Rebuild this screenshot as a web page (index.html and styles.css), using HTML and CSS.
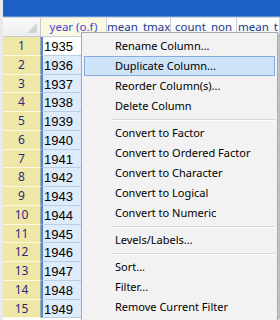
FILE: index.html
```html
<!DOCTYPE html>
<html>
<head>
    <link rel="stylesheet" href="styles.css">
</head>
<body>
    <div class="window">
        <div class="titlebar"></div>
        <div class="sheet">
            <div class="corner"><span class="corner-tri"></span></div>
            <div class="col-head col-selected">year (o.f)</div>
            <div class="col-head">mean_tmax</div>
            <div class="col-head">count_non</div>
            <div class="col-head">mean_t</div>

            <div class="row-head">1</div><div class="cell cell-active">1935</div><div class="cell-plain"></div><div class="cell-plain"></div><div class="cell-plain"></div>
            <div class="row-head">2</div><div class="cell">1936</div><div class="cell-plain"></div><div class="cell-plain"></div><div class="cell-plain"></div>
            <div class="row-head">3</div><div class="cell">1937</div><div class="cell-plain"></div><div class="cell-plain"></div><div class="cell-plain"></div>
            <div class="row-head">4</div><div class="cell">1938</div><div class="cell-plain"></div><div class="cell-plain"></div><div class="cell-plain"></div>
            <div class="row-head">5</div><div class="cell">1939</div><div class="cell-plain"></div><div class="cell-plain"></div><div class="cell-plain"></div>
            <div class="row-head">6</div><div class="cell">1940</div><div class="cell-plain"></div><div class="cell-plain"></div><div class="cell-plain"></div>
            <div class="row-head">7</div><div class="cell">1941</div><div class="cell-plain"></div><div class="cell-plain"></div><div class="cell-plain"></div>
            <div class="row-head">8</div><div class="cell">1942</div><div class="cell-plain"></div><div class="cell-plain"></div><div class="cell-plain"></div>
            <div class="row-head">9</div><div class="cell">1943</div><div class="cell-plain"></div><div class="cell-plain"></div><div class="cell-plain"></div>
            <div class="row-head">10</div><div class="cell">1944</div><div class="cell-plain"></div><div class="cell-plain"></div><div class="cell-plain"></div>
            <div class="row-head">11</div><div class="cell">1945</div><div class="cell-plain"></div><div class="cell-plain"></div><div class="cell-plain"></div>
            <div class="row-head">12</div><div class="cell">1946</div><div class="cell-plain"></div><div class="cell-plain"></div><div class="cell-plain"></div>
            <div class="row-head">13</div><div class="cell">1947</div><div class="cell-plain"></div><div class="cell-plain"></div><div class="cell-plain"></div>
            <div class="row-head">14</div><div class="cell">1948</div><div class="cell-plain"></div><div class="cell-plain"></div><div class="cell-plain"></div>
            <div class="row-head">15</div><div class="cell">1949</div><div class="cell-plain"></div><div class="cell-plain"></div><div class="cell-plain"></div>
        </div>
    </div>

    <div class="menu">
        <div class="menu-item">Rename Column...</div>
        <div class="menu-item menu-item-hover">Duplicate Column...</div>
        <div class="menu-item">Reorder Column(s)...</div>
        <div class="menu-item">Delete Column</div>
        <div class="menu-sep"></div>
        <div class="menu-item">Convert to Factor</div>
        <div class="menu-item">Convert to Ordered Factor</div>
        <div class="menu-item">Convert to Character</div>
        <div class="menu-item">Convert to Logical</div>
        <div class="menu-item">Convert to Numeric</div>
        <div class="menu-sep"></div>
        <div class="menu-item">Levels/Labels...</div>
        <div class="menu-sep"></div>
        <div class="menu-item">Sort...</div>
        <div class="menu-item">Filter...</div>
        <div class="menu-item">Remove Current Filter</div>
    </div>
</body>
</html>
```

FILE: styles.css
```css
* {
    margin: 0;
    padding: 0;
    box-sizing: border-box;
}

body {
    width: 280px;
    height: 320px;
    overflow: hidden;
    background-color: #e9e9e9;
    font-family: 'Noto Sans', 'Liberation Sans', sans-serif;
    position: relative;
}

.window {
    margin-left: 3px;
    background-color: #ffffff;
    height: 100%;
}

.titlebar {
    height: 17px;
    background-color: #1c60c6;
    border-bottom: 1px solid #5a8fd8;
}

.sheet {
    display: grid;
    grid-template-columns: 38px 66px 64px 66px 1fr;
    grid-template-rows: 19px repeat(15, 18.75px);
    background-color: #ffffff;
    border-top: 1px solid #d8d8d8;
}

.corner {
    position: relative;
    background: linear-gradient(#fafafa, #eeeeee);
    border-right: 1px solid #c8c8c8;
    border-bottom: 1px solid #c8c8c8;
}

.corner-tri {
    position: absolute;
    right: 3px;
    bottom: 3px;
    width: 0;
    height: 0;
    border-left: 10px solid transparent;
    border-bottom: 10px solid #d4d4d4;
}

.col-head {
    font-size: 11.5px;
    color: #1e3c8c;
    text-align: center;
    line-height: 17px;
    background: linear-gradient(#ffffff, #f3f5f8);
    border-right: 1px solid #c8d0dc;
    border-bottom: 1px solid #c8d0dc;
    white-space: nowrap;
    overflow: hidden;
}

.col-selected {
    background: #fbf8e2;
    color: #4646d8;
}

.row-head {
    font-size: 12px;
    color: #2a2a7e;
    text-align: center;
    line-height: 18px;
    background-color: #efe7a6;
    border-right: 1px solid #a8a8a8;
    border-bottom: 1px solid #fbf8e4;
}

.cell {
    font-family: 'Liberation Sans', sans-serif;
    font-size: 13px;
    line-height: 19px;
    padding-left: 1px;
    background-color: #deebfa;
    border-left: 2px solid #4a8bdb;
    border-right: 1px solid #b9cde4;
    border-bottom: 1px solid #b9cde4;
    color: #000000;
}

.cell-active {
    background-color: #ffffff;
}

.cell-plain {
    border-right: 1px solid #dcdcdc;
    border-bottom: 1px solid #dcdcdc;
}

.menu {
    position: absolute;
    left: 81px;
    top: 32px;
    width: 197px;
    height: 300px;
    padding: 3px 2px;
    background-color: #f2f2f2;
    border: 1px solid #a9a9a9;
    box-shadow: 2px 2px 3px rgba(0, 0, 0, 0.25);
    font-size: 11px;
    color: #000000;
}

.menu-item {
    height: 20px;
    line-height: 18px;
    padding-left: 30px;
    border: 1px solid transparent;
    white-space: nowrap;
}

.menu-item-hover {
    background-color: #cce3f8;
    border-color: #86addf;
}

.menu-sep {
    height: 7px;
    margin-left: 28px;
    padding-top: 3px;
}

.menu-sep::after {
    content: "";
    display: block;
    height: 1px;
    background-color: #d7d7d7;
    border-bottom: 1px solid #ffffff;
}
```
